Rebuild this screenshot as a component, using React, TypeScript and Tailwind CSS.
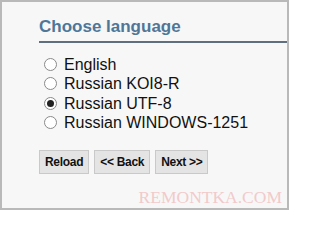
const languages = [
  { id: "en", label: "English", checked: false },
  { id: "koi8", label: "Russian KOI8-R", checked: false },
  { id: "utf8", label: "Russian UTF-8", checked: true },
  { id: "cp1251", label: "Russian WINDOWS-1251", checked: false },
];

const buttons = ["Reload", "<< Back", "Next >>"];

const Radio = ({ checked }: { checked: boolean }) => (
  <span className="flex h-[13px] w-[13px] items-center justify-center rounded-full border border-[#8a8a8a] bg-white">
    {checked && <span className="h-[7px] w-[7px] rounded-full bg-[#222]" />}
  </span>
);

export default function App() {
  return (
    <div className="relative h-[210px] w-[289px] overflow-hidden border-2 border-[#b9b9b9] bg-[#f7f7f7] font-[Liberation_Sans,Arial,sans-serif]">
      <div className="ml-[37px] pt-[15px]">
        {/* Header */}
        <h1 className="border-b-2 border-[#5f6f7e] pb-[4px] text-[17px] font-bold leading-[20px] text-[#4f7697]">
          Choose language
        </h1>

        {/* Options */}
        <div className="mt-[12px] flex flex-col">
          {languages.map((lang) => (
            <label key={lang.id} className="flex h-[19.3px] items-center text-[16px] leading-[19px] text-[#111]">
              <span className="ml-[5px] mr-[7px]">
                <Radio checked={lang.checked} />
              </span>
              {lang.label}
            </label>
          ))}
        </div>

        {/* Actions */}
        <div className="mt-[18px] flex gap-[5px]">
          {buttons.map((b) => (
            <button
              key={b}
              className="h-[24px] border border-[#c9c9c9] bg-[#e4e4e4] px-[5px] text-[12px] font-bold tracking-tight text-[#111]"
            >
              {b}
            </button>
          ))}
        </div>
      </div>

      {/* Watermark */}
      <div className="absolute bottom-[2px] right-[5px] font-['Liberation_Serif',serif] text-[17.5px] leading-none text-[#f2caca]">
        REMONTKA.COM
      </div>
    </div>
  );
}
